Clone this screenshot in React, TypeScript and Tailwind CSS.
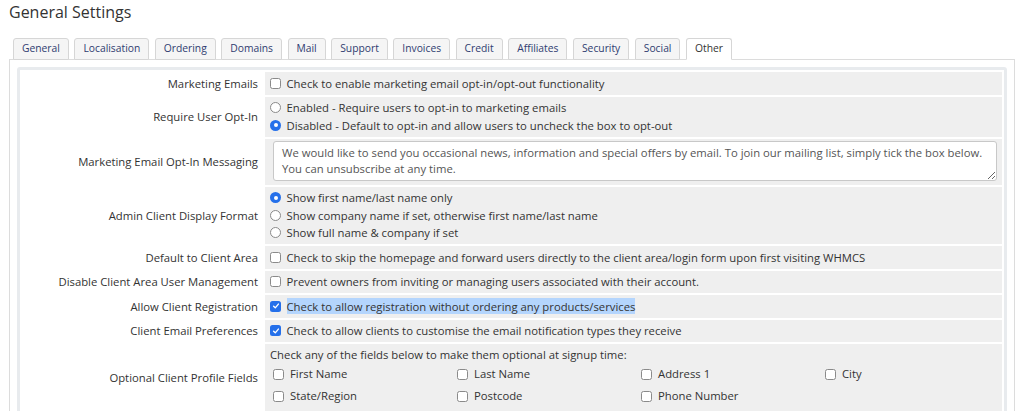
import type { ReactNode } from 'react';

const tabs = [
  'General',
  'Localisation',
  'Ordering',
  'Domains',
  'Mail',
  'Support',
  'Invoices',
  'Credit',
  'Affiliates',
  'Security',
  'Social',
  'Other',
];

const Checkbox = ({ checked = false }: { checked?: boolean }) =>
  checked ? (
    <span className="inline-flex h-[11px] w-[11px] shrink-0 items-center justify-center rounded-[2.5px] bg-[#2570ea]">
      <svg viewBox="0 0 10 10" className="h-[8px] w-[8px]">
        <path d="M2 5.3 L4.1 7.3 L8 2.6" fill="none" stroke="#fff" strokeWidth="1.7" strokeLinecap="round" strokeLinejoin="round" />
      </svg>
    </span>
  ) : (
    <span className="inline-block h-[11px] w-[11px] shrink-0 rounded-[2.5px] border border-[#8a8a8a] bg-white" />
  );

const Radio = ({ checked = false }: { checked?: boolean }) =>
  checked ? (
    <span className="inline-flex h-[11px] w-[11px] shrink-0 items-center justify-center rounded-full bg-[#2570ea]">
      <span className="h-[4px] w-[4px] rounded-full bg-white" />
    </span>
  ) : (
    <span className="inline-block h-[11px] w-[11px] shrink-0 rounded-full border border-[#8a8a8a] bg-white" />
  );

const Row = ({ label, children }: { label: string; children: ReactNode }) => (
  <div className="flex gap-[2px]">
    <div className="flex w-[241px] shrink-0 items-center justify-end bg-white pr-[5px] text-right">{label}</div>
    <div className="min-w-0 flex-1 bg-[#efefef] px-[5px] py-[2.5px]">{children}</div>
  </div>
);

const Option = ({ control, children }: { control: ReactNode; children: ReactNode }) => (
  <div className="flex h-[17.5px] items-center gap-[5.5px]">
    {control}
    <span>{children}</span>
  </div>
);

const optionalFields = [
  ['First Name', 'Last Name', 'Address 1', 'City'],
  ['State/Region', 'Postcode', 'Phone Number'],
];

export default function App() {
  return (
    <div className="h-[411px] overflow-hidden bg-white px-[9px] font-['Open_Sans',sans-serif] text-[11.3px] leading-[17.5px] text-[#333]">
      <div className="h-[38px] text-[16px] leading-[24px] text-[#333]">General Settings</div>

      <div className="relative z-10 flex h-[22px] gap-[5.5px] pl-[4px]">
        {tabs.map((tab) => {
          const active = tab === 'Other';
          return (
            <div
              key={tab}
              className={`flex items-center rounded-t-[3px] border px-[8px] text-[10.3px] ${
                active
                  ? 'border-[#d6d6d6] border-b-white bg-white text-[#333]'
                  : 'border-[#d6d6d6] bg-[#f5f5f5] text-[#2f3c70]'
              }`}
            >
              {tab}
            </div>
          );
        })}
      </div>

      <div className="-mt-px border border-[#dcdcdc] p-[7px]">
        <div className="flex flex-col gap-[2px] rounded-[3px] border-[3px] border-[#e8ebee] p-[2px]">
          <Row label="Marketing Emails">
            <Option control={<Checkbox />}>Check to enable marketing email opt-in/opt-out functionality</Option>
          </Row>

          <Row label="Require User Opt-In">
            <Option control={<Radio />}>Enabled - Require users to opt-in to marketing emails</Option>
            <Option control={<Radio checked />}>
              Disabled - Default to opt-in and allow users to uncheck the box to opt-out
            </Option>
          </Row>

          <Row label="Marketing Email Opt-In Messaging">
            <div className="pb-[1px] pl-[3px]">
              <textarea
                readOnly
                className="block h-[40px] w-full resize-y rounded-[3px] border border-[#c8c8c8] bg-white px-[8px] py-[3px] text-[11.3px] leading-[16px] text-[#555] outline-none"
                defaultValue="We would like to send you occasional news, information and special offers by email. To join our mailing list, simply tick the box below. You can unsubscribe at any time."
              />
            </div>
          </Row>

          <Row label="Admin Client Display Format">
            <Option control={<Radio checked />}>Show first name/last name only</Option>
            <Option control={<Radio />}>Show company name if set, otherwise first name/last name</Option>
            <Option control={<Radio />}>Show full name &amp; company if set</Option>
          </Row>

          <Row label="Default to Client Area">
            <Option control={<Checkbox />}>
              Check to skip the homepage and forward users directly to the client area/login form upon first visiting WHMCS
            </Option>
          </Row>

          <Row label="Disable Client Area User Management">
            <Option control={<Checkbox />}>
              Prevent owners from inviting or managing users associated with their account.
            </Option>
          </Row>

          <Row label="Allow Client Registration">
            <Option control={<Checkbox checked />}>
              <span className="bg-[#b4d5fd] py-[0.5px]">
                Check to allow registration without ordering any products/services
              </span>
            </Option>
          </Row>

          <Row label="Client Email Preferences">
            <Option control={<Checkbox checked />}>
              Check to allow clients to customise the email notification types they receive
            </Option>
          </Row>

          <Row label="Optional Client Profile Fields">
            <div className="-mt-[1px]">Check any of the fields below to make them optional at signup time:</div>
            <div className="ml-[3px] pb-[1px]">
              {optionalFields.map((line, i) => (
                <div key={i} className="flex h-[22px] items-center">
                  {line.map((field) => (
                    <div key={field} className="flex w-[184px] shrink-0 items-center gap-[6px]">
                      <Checkbox />
                      <span>{field}</span>
                    </div>
                  ))}
                </div>
              ))}
            </div>
          </Row>
        </div>
      </div>
    </div>
  );
}
